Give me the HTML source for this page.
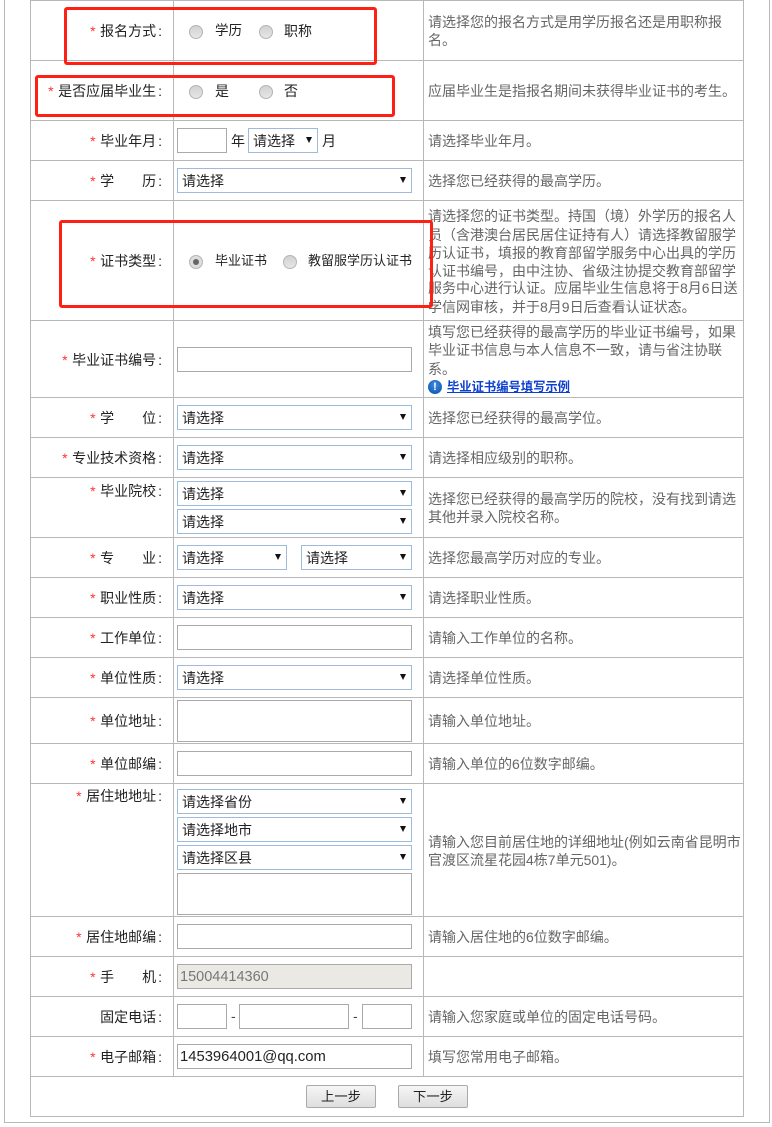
<!DOCTYPE html>
<html lang="zh"><head><meta charset="utf-8"><title>报名</title>
<style>
html,body{margin:0;padding:0;background:#fff}
#p{position:relative;width:772px;height:1127px;overflow:hidden;font:14px/20px "Liberation Sans","Noto Sans CJK SC",sans-serif;color:#222}
#p div,#p span.a{position:absolute}
.h{left:30px;width:714px;height:1px;background:#b8b8b8}
.v{top:0;width:1px;background:#b8b8b8}
.l{right:610px;white-space:nowrap;height:20px}
.l i{font-style:normal;color:#f33;margin-right:4.5px}
.l b{font-weight:normal;margin-left:2px}
.t{left:428px;white-space:nowrap;color:#666;height:20px}
.i{box-sizing:border-box;border:1px solid #aaa;background:#fff;height:25px;left:177px;width:235px}
.s{box-sizing:border-box;border:1px solid #9fbbdc;background:#fff;height:25px;left:177px;width:235px;padding-left:4px;line-height:24px;color:#222;white-space:nowrap}
.s:after{content:"";position:absolute;right:5.5px;top:8px;border-left:3.5px solid transparent;border-right:3.5px solid transparent;border-top:6px solid #111}
.r{box-sizing:border-box;width:14px;height:14px;border-radius:50%;border:1px solid #b5b5b5;background:linear-gradient(#d2d2d2,#e6e6e6)}
.c{white-space:nowrap;height:20px}
.b{box-sizing:border-box;width:70px;height:23px;top:1085px;border:1px solid #aaa;border-radius:2px;background:linear-gradient(#f6f6f6,#dedede);text-align:center;line-height:22px;color:#222;font-size:13.3px}
.x{box-sizing:border-box;border:3px solid #ff2015;border-radius:3px}
</style></head><body><div id="p">
<div style="left:4px;top:-2px;width:766px;height:1125px;box-sizing:border-box;border:1px solid #b8b8b8"></div>

<div class="h" style="top:0"></div><div class="h" style="top:60px"></div><div class="h" style="top:120px"></div><div class="h" style="top:160px"></div><div class="h" style="top:200px"></div><div class="h" style="top:320px"></div><div class="h" style="top:397px"></div><div class="h" style="top:437px"></div><div class="h" style="top:477px"></div><div class="h" style="top:537px"></div><div class="h" style="top:577px"></div><div class="h" style="top:617px"></div><div class="h" style="top:657px"></div><div class="h" style="top:697px"></div><div class="h" style="top:743px"></div><div class="h" style="top:783px"></div><div class="h" style="top:916px"></div><div class="h" style="top:956px"></div><div class="h" style="top:996px"></div><div class="h" style="top:1036px"></div><div class="h" style="top:1076px"></div><div class="h" style="top:1116px"></div>
<div class="v" style="left:30px;height:1117px"></div><div class="v" style="left:173px;height:1076px"></div><div class="v" style="left:423px;height:1076px"></div><div class="v" style="left:743px;height:1117px"></div>

<div class="l" style="top:21px"><i>*</i>报名方式<b>:</b></div>
<div class="r" style="left:189px;top:25px"></div><div class="c" style="left:215px;top:21px;font-size:13.5px">学历</div>
<div class="r" style="left:259px;top:25px"></div><div class="c" style="left:284px;top:21px">职称</div>
<div class="t" style="top:12px">请选择您的报名方式是用学历报名还是用职称报</div>
<div class="t" style="top:30px">名。</div>

<div class="l" style="top:81px"><i>*</i>是否应届毕业生<b>:</b></div>
<div class="r" style="left:189px;top:85px"></div><div class="c" style="left:215px;top:81px">是</div>
<div class="r" style="left:259px;top:85px"></div><div class="c" style="left:284px;top:81px">否</div>
<div class="t" style="top:81px">应届毕业生是指报名期间未获得毕业证书的考生。</div>

<div class="l" style="top:131px"><i>*</i>毕业年月<b>:</b></div>
<div class="i" style="top:128px;width:50px"></div><div class="c" style="left:231px;top:131px">年</div>
<div class="s" style="top:128px;left:248px;width:70px">请选择</div><div class="c" style="left:322px;top:131px">月</div>
<div class="t" style="top:131px">请选择毕业年月。</div>

<div class="l" style="top:171px"><i>*</i>学<span style="margin-left:28px">历</span><b>:</b></div>
<div class="s" style="top:168px">请选择</div>
<div class="t" style="top:171px">选择您已经获得的最高学历。</div>

<div class="l" style="top:251px"><i>*</i>证书类型<b>:</b></div>
<div class="r" style="left:189px;top:255px;background:#ddd"><div style="left:3px;top:3px;width:6px;height:6px;border-radius:50%;background:#666"></div></div>
<div class="c" style="left:215px;top:251px;font-size:13px">毕业证书</div>
<div class="r" style="left:283px;top:255px"></div><div class="c" style="left:308px;top:251px;font-size:13px">教留服学历认证书</div>
<div class="t" style="top:206px">请选择您的证书类型。持国（境）外学历的报名人</div>
<div class="t" style="top:225px">员（含港澳台居民居住证持有人）请选择教留服学</div>
<div class="t" style="top:243px">历认证书，填报的教育部留学服务中心出具的学历</div>
<div class="t" style="top:261px">认证书编号，由中注协、省级注协提交教育部留学</div>
<div class="t" style="top:278px">服务中心进行认证。应届毕业生信息将于8月6日送</div>
<div class="t" style="top:297px">学信网审核，并于8月9日后查看认证状态。</div>

<div class="l" style="top:350px"><i>*</i>毕业证书编号<b>:</b></div>
<div class="i" style="top:347px"></div>
<div class="t" style="top:322px">填写您已经获得的最高学历的毕业证书编号，如果</div>
<div class="t" style="top:340px">毕业证书信息与本人信息不一致，请与省注协联</div>
<div class="t" style="top:359px">系。</div>
<div style="left:428px;top:380px;width:14px;height:14px;border-radius:50%;background:radial-gradient(circle at 50% 35%,#3d8be0,#0b4fa8);color:#fff;font:bold 11px/14px 'Liberation Sans',sans-serif;text-align:center">!</div>
<div class="c" style="left:447px;top:377px;color:#0d3fd0;font-weight:bold;font-size:12.3px;text-decoration:underline">毕业证书编号填写示例</div>

<div class="l" style="top:408px"><i>*</i>学<span style="margin-left:28px">位</span><b>:</b></div>
<div class="s" style="top:405px">请选择</div>
<div class="t" style="top:408px">选择您已经获得的最高学位。</div>

<div class="l" style="top:448px"><i>*</i>专业技术资格<b>:</b></div>
<div class="s" style="top:445px">请选择</div>
<div class="t" style="top:448px">请选择相应级别的职称。</div>

<div class="l" style="top:481px"><i>*</i>毕业院校<b>:</b></div>
<div class="s" style="top:481px">请选择</div><div class="s" style="top:509px">请选择</div>
<div class="t" style="top:489px">选择您已经获得的最高学历的院校，没有找到请选</div>
<div class="t" style="top:507px">其他并录入院校名称。</div>

<div class="l" style="top:548px"><i>*</i>专<span style="margin-left:28px">业</span><b>:</b></div>
<div class="s" style="top:545px;width:110px">请选择</div><div class="s" style="top:545px;left:301px;width:111px">请选择</div>
<div class="t" style="top:548px">选择您最高学历对应的专业。</div>

<div class="l" style="top:588px"><i>*</i>职业性质<b>:</b></div>
<div class="s" style="top:585px">请选择</div>
<div class="t" style="top:588px">请选择职业性质。</div>

<div class="l" style="top:628px"><i>*</i>工作单位<b>:</b></div>
<div class="i" style="top:625px"></div>
<div class="t" style="top:628px">请输入工作单位的名称。</div>

<div class="l" style="top:668px"><i>*</i>单位性质<b>:</b></div>
<div class="s" style="top:665px">请选择</div>
<div class="t" style="top:668px">请选择单位性质。</div>

<div class="l" style="top:711px"><i>*</i>单位地址<b>:</b></div>
<div class="i" style="top:700px;height:42px"></div>
<div class="t" style="top:711px">请输入单位地址。</div>

<div class="l" style="top:754px"><i>*</i>单位邮编<b>:</b></div>
<div class="i" style="top:751px"></div>
<div class="t" style="top:754px">请输入单位的6位数字邮编。</div>

<div class="l" style="top:786px"><i>*</i>居住地地址<b>:</b></div>
<div class="s" style="top:789px">请选择省份</div><div class="s" style="top:817px">请选择地市</div><div class="s" style="top:845px">请选择区县</div>
<div class="i" style="top:873px;height:42px"></div>
<div class="t" style="top:832px">请输入您目前居住地的详细地址(例如云南省昆明市</div>
<div class="t" style="top:850px">官渡区流星花园4栋7单元501)。</div>

<div class="l" style="top:927px"><i>*</i>居住地邮编<b>:</b></div>
<div class="i" style="top:924px"></div>
<div class="t" style="top:927px">请输入居住地的6位数字邮编。</div>

<div class="l" style="top:967px"><i>*</i>手<span style="margin-left:28px">机</span><b>:</b></div>
<div class="i" style="top:964px;background:#ebe9e3;color:#777;font-size:14.5px;line-height:24px;padding-left:2px">15004414360</div>

<div class="l" style="top:1007px">固定电话<b>:</b></div>
<div class="i" style="top:1004px;width:50px"></div><div class="c" style="left:231px;top:1006px;color:#444">-</div>
<div class="i" style="top:1004px;left:239px;width:110px"></div><div class="c" style="left:353px;top:1006px;color:#444">-</div>
<div class="i" style="top:1004px;left:362px;width:50px"></div>
<div class="t" style="top:1007px">请输入您家庭或单位的固定电话号码。</div>

<div class="l" style="top:1047px"><i>*</i>电子邮箱<b>:</b></div>
<div class="i" style="top:1044px;color:#222;font-size:14.8px;line-height:24px;padding-left:2px">1453964001@qq.com</div>
<div class="t" style="top:1047px">填写您常用电子邮箱。</div>

<div class="b" style="left:306px">上一步</div><div class="b" style="left:398px">下一步</div>

<div class="x" style="left:63.5px;top:7px;width:313.5px;height:58px"></div>
<div class="x" style="left:34.5px;top:75px;width:360.5px;height:42px"></div>
<div class="x" style="left:59px;top:220px;width:374px;height:88px"></div>
</div></body></html>
